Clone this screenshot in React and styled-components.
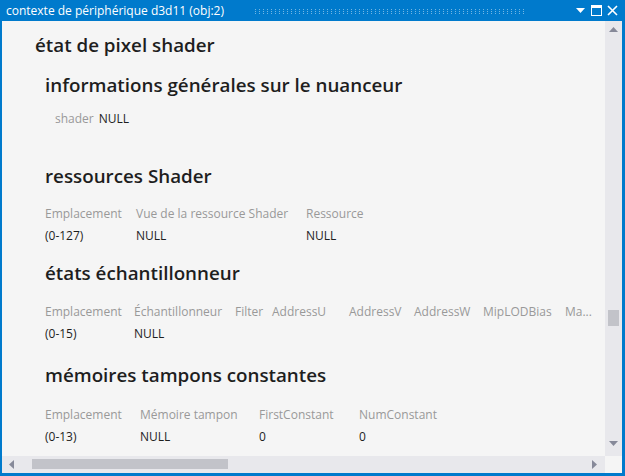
import React from 'react';
import styled, { createGlobalStyle } from 'styled-components';

const GlobalStyle = createGlobalStyle`
  body {
    margin: 0;
    background: #f5f5f5;
  }
`;

const uiFont = `"Segoe UI", "Open Sans", "Noto Sans", sans-serif`;
const accent = '#007acc';

// Window frame

const Window = styled.div`
  width: 625px;
  height: 476px;
  box-sizing: border-box;
  border: solid ${accent};
  border-width: 0 3px 3px 2px;
  display: grid;
  grid-template-rows: 21px 1fr;
  background: #f5f5f5;
  overflow: hidden;
  font-family: ${uiFont};
`;

const TitleBar = styled.div`
  background: ${accent};
  display: flex;
  align-items: center;
  padding: 0 4px;
  color: #fff;
`;

const Title = styled.span`
  font-size: 12px;
  white-space: nowrap;
  line-height: 20px;
  flex: none;
`;

const Grip = styled.svg`
  flex: none;
  margin: 1px 0 0 31px;
  display: block;
`;

const TitleButtons = styled.div`
  display: flex;
  align-items: center;
  gap: 4px;
  margin-left: auto;
`;

const TitleButton = styled.div`
  width: 12px;
  height: 14px;
  display: flex;
  align-items: center;
  justify-content: center;
`;

// Content area with scrollbars

const Body = styled.div`
  display: grid;
  grid-template-columns: 1fr 17px;
  grid-template-rows: 1fr 17px;
  min-height: 0;
`;

const Content = styled.div`
  overflow: hidden;
  padding: 11px 0 0 33px;
  min-width: 0;
  color: #1e1e1e;
`;

const PageTitle = styled.h1`
  margin: 0;
  font-size: 18.8px;
  font-weight: 600;
  line-height: 26px;
  white-space: nowrap;
`;

const SectionTitle = styled.h2`
  margin: ${({ $top }) => $top}px 0 0 10px;
  font-size: 18.8px;
  font-weight: 600;
  line-height: 26px;
  white-space: nowrap;
`;

const PropRow = styled.div`
  display: flex;
  gap: 5px;
  margin: 12px 0 0 20px;
  font-size: 12px;
  line-height: 18px;
`;

const Label = styled.span`
  color: #999;
  white-space: nowrap;
`;

const Value = styled.span`
  color: #1e1e1e;
  white-space: nowrap;
`;

const Table = styled.div`
  display: grid;
  grid-template-columns: ${({ $cols }) => $cols};
  margin: ${({ $top }) => $top}px 0 0 10px;
  font-size: 12px;
  line-height: 22px;
  width: max-content;
`;

const VScroll = styled.div`
  background: #e8e8ec;
  display: flex;
  flex-direction: column;
  align-items: center;
  justify-content: space-between;
  padding: 6px 0 10px;
  position: relative;
`;

const HScroll = styled.div`
  background: #e8e8ec;
  display: flex;
  align-items: center;
  justify-content: space-between;
  padding: 0 8px 0 7px;
  position: relative;
`;

const VThumb = styled.div`
  position: absolute;
  left: 3px;
  top: 289px;
  width: 11px;
  height: 16px;
  background: #c2c3c9;
`;

const HThumb = styled.div`
  position: absolute;
  left: 30px;
  top: 3px;
  width: 196px;
  height: 10px;
  background: #c2c3c9;
`;

const Corner = styled.div`
  background: #f5f5f5;
`;

const Arrow = ({ dir }) => {
  const pts = {
    up: '0,5 4.5,0 9,5',
    down: '0,0 9,0 4.5,5',
    left: '5,0 5,9 0,4.5',
    right: '0,0 0,9 5,4.5',
  }[dir];
  const vertical = dir === 'up' || dir === 'down';
  return (
    <svg width={vertical ? 9 : 5} height={vertical ? 5 : 9} viewBox={vertical ? '0 0 9 5' : '0 0 5 9'}>
      <polygon points={pts} fill="#868999" />
    </svg>
  );
};

const resources = ['91px', '170px', 'auto'];
const samplers = ['89px', '101px', '37px', '77px', '65px', '69px', '82px', 'auto'];
const constants = ['95px', '119px', '100px', 'auto'];

const samplerHeads = ['Emplacement', 'Échantillonneur', 'Filter', 'AddressU', 'AddressV', 'AddressW', 'MipLODBias', 'Ma...'];

export default function App() {
  return (
    <>
      <GlobalStyle />
      <Window>
        <TitleBar>
          <Title>contexte de périphérique d3d11 (obj:2)</Title>
          <Grip width="272" height="5" viewBox="0 0 272 5">
            <defs>
              <pattern id="grip-dots" width="4" height="2" patternUnits="userSpaceOnUse">
                <rect x="0" y="0" width="1" height="1" fill="rgba(255,255,255,0.45)" />
              </pattern>
            </defs>
            <rect x="0" y="0" width="272" height="5" fill="url(#grip-dots)" />
          </Grip>
          <TitleButtons>
            <TitleButton>
              <svg width="9" height="5" viewBox="0 0 9 5">
                <polygon points="0,0 9,0 4.5,5" fill="#fff" />
              </svg>
            </TitleButton>
            <TitleButton>
              <svg width="11" height="11" viewBox="0 0 11 11">
                <rect x="0.5" y="0.5" width="10" height="10" fill="none" stroke="#fff" />
                <rect x="0" y="0" width="11" height="3" fill="#fff" />
              </svg>
            </TitleButton>
            <TitleButton>
              <svg width="11" height="11" viewBox="0 0 11 11">
                <path d="M1 1 L10 10 M10 1 L1 10" stroke="#fff" strokeWidth="1.6" />
              </svg>
            </TitleButton>
          </TitleButtons>
        </TitleBar>
        <Body>
          <Content>
            <PageTitle>état de pixel shader</PageTitle>
            <SectionTitle $top={14}>informations générales sur le nuanceur</SectionTitle>
            <PropRow>
              <Label>shader</Label>
              <Value>NULL</Value>
            </PropRow>

            <SectionTitle $top={35}>ressources Shader</SectionTitle>
            <Table $cols={resources.join(' ')} $top={14}>
              <Label>Emplacement</Label>
              <Label>Vue de la ressource Shader</Label>
              <Label>Ressource</Label>
              <Value>(0-127)</Value>
              <Value>NULL</Value>
              <Value>NULL</Value>
            </Table>

            <SectionTitle $top={13}>états échantillonneur</SectionTitle>
            <Table $cols={samplers.join(' ')} $top={15}>
              {samplerHeads.map((h) => (
                <Label key={h}>{h}</Label>
              ))}
              <Value>(0-15)</Value>
              <Value>NULL</Value>
            </Table>

            <SectionTitle $top={17}>mémoires tampons constantes</SectionTitle>
            <Table $cols={constants.join(' ')} $top={16}>
              <Label>Emplacement</Label>
              <Label>Mémoire tampon</Label>
              <Label>FirstConstant</Label>
              <Label>NumConstant</Label>
              <Value>(0-13)</Value>
              <Value>NULL</Value>
              <Value>0</Value>
              <Value>0</Value>
            </Table>
          </Content>
          <VScroll>
            <Arrow dir="up" />
            <VThumb />
            <Arrow dir="down" />
          </VScroll>
          <HScroll>
            <Arrow dir="left" />
            <HThumb />
            <Arrow dir="right" />
          </HScroll>
          <Corner />
        </Body>
      </Window>
    </>
  );
}
